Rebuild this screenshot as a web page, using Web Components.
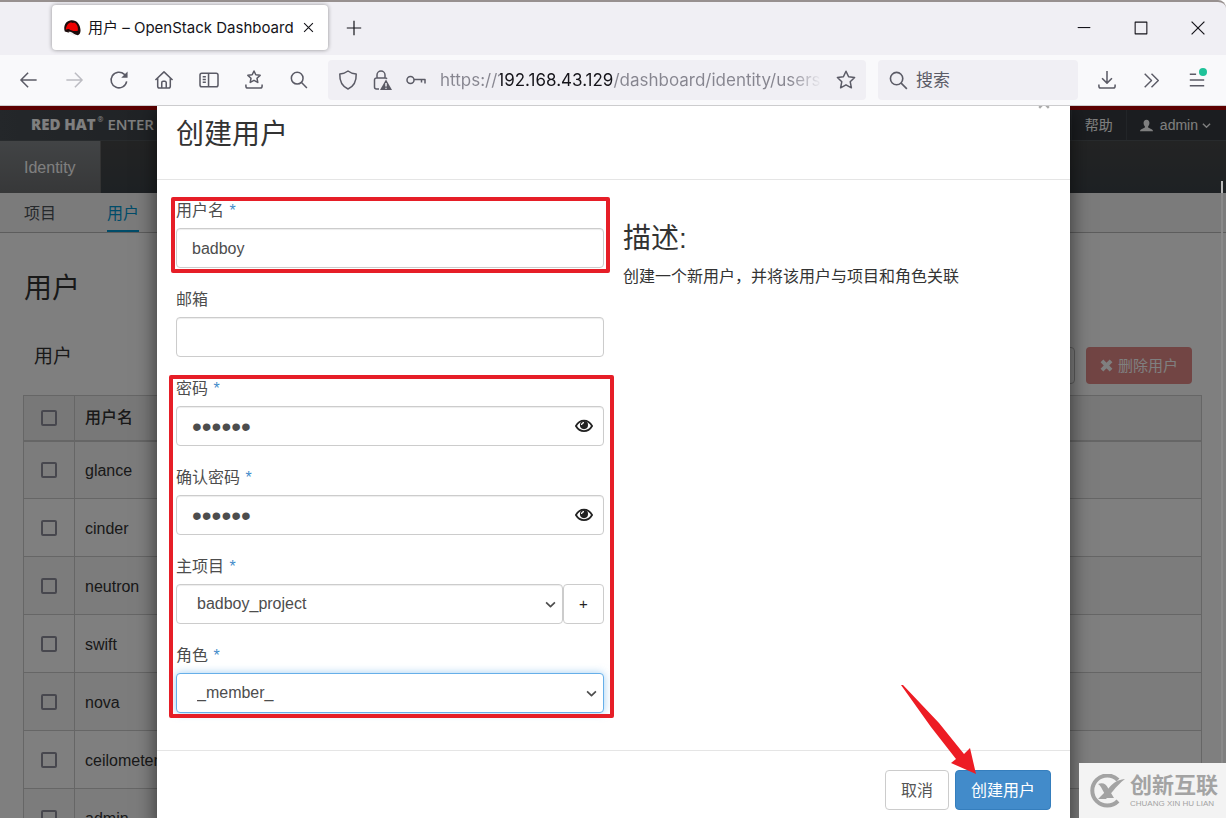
<!DOCTYPE html>
<html lang="zh-CN">
<head>
<meta charset="utf-8">
<title>用户 – OpenStack Dashboard</title>
<style>
  html, body { height: 100%; margin: 0; }
  body {
    display: flex;
    flex-direction: column;
    overflow: hidden;
    font: 16px/24px "Liberation Sans", "Noto Sans CJK SC", sans-serif;
    color: #333;
  }
</style>
</head>
<body>
<browser-tabs heading="用户 – OpenStack Dashboard"></browser-tabs>
<browser-toolbar></browser-toolbar>
<page-view>
  <dashboard-page></dashboard-page>
  <modal-dialog slot="dialog" heading="创建用户">
    <marked-area class="single">
      <form-field label="用户名" value="badboy" required></form-field>
    </marked-area>
    <form-field label="邮箱"></form-field>
    <marked-area class="group">
      <form-field label="密码" type="password" value="badboy" required></form-field>
      <form-field label="确认密码" type="password" value="badboy" required></form-field>
      <form-field label="主项目" type="select" value="badboy_project" addable required></form-field>
      <form-field label="角色" type="select" value="_member_" active required></form-field>
    </marked-area>
    <h3 slot="help-title">描述:</h3>
    <p slot="help">创建一个新用户，并将该用户与项目和角色关联</p>
  </modal-dialog>
  <site-badge slot="badge"></site-badge>
</page-view>

<script>
// Base class: each element only has to give its markup
class BaseElement extends HTMLElement {
  connectedCallback() {
    if (this.shadowRoot) return;
    const template = document.createElement('template');
    template.innerHTML = `<style>
      *, *::before, *::after { box-sizing: border-box; }
      :host { box-sizing: border-box; display: block; }
      button, input, select { font: inherit; color: inherit; margin: 0; }
      button { padding: 0; border: 0; background: none; cursor: pointer; }
      a { color: inherit; text-decoration: none; }
    </style>` + this.render();
    this.attachShadow({ mode: 'open' }).appendChild(template.content.cloneNode(true));
  }
  attr(name) { return this.getAttribute(name) || ''; }
}

// Line icons, drawn on a 20x20 grid
const ICONS = {
  back: '<path d="M18.500 10H1M9 2l-8 8 8 8"/>',
  forward: '<path d="M1.500 10H19M11 2l8 8-8 8"/>',
  reload: '<path d="M18.500 11.500A8.700 8.700 0 1 1 16 3.800L18 6"/><path d="M19.500.500v7h-7z" fill="currentColor" stroke="none"/>',
  home: '<path d="M.500 10 10 1l9.500 9M3 8v9a2 2 0 0 0 2 2h10a2 2 0 0 0 2-2V8M7.500 19v-6A1.500 1.500 0 0 1 9 11.500h2a1.500 1.500 0 0 1 1.500 1.500v6"/>',
  sidebar: '<rect x="0" y="2.500" width="20" height="15" rx="2"/><path d="M9.500 2.500v15M3 6.500h3.500M3 9.500h3.500M3 12.500h3.500"/>',
  saved: '<path d="M10 0l2 4.200 4.800.600-3.500 3.200.900 4.700L10 10.400 5.800 12.700l.900-4.700-3.500-3.200L8 4.200zM1 15v2a2 2 0 0 0 2 2h14a2 2 0 0 0 2-2v-2"/>',
  search: '<circle cx="8" cy="8" r="6.500"/><path d="M12.800 12.800l6 6"/>',
  shield: '<path d="M10 1C7.500 3 5 3.800 1.800 4c-.300 7 1.700 12 8.200 15 6.500-3 8.500-8 8.200-15C15 3.800 12.500 3 10 1z"/>',
  lock: '<path d="M5 8V5a4 4 0 0 1 8 0v3M7 19H4.500a2 2 0 0 1-2-2v-7a2 2 0 0 1 2-2h9a2 2 0 0 1 1.500.700"/><path d="M14 9.500L20 20H8z" fill="currentColor" stroke="none"/><path d="M14 13v3.500M14 17.800v1" stroke="#f0eff4"/>',
  key: '<circle cx="4.500" cy="10" r="3.500"/><path d="M8 9.500h11v4M15.500 9.500v3"/>',
  star: '<path d="M10 1.200l2.600 5.600 6 .700-4.400 4.200 1.200 6.100L10 14.800l-5.400 3 1.200-6.100L1.400 7.500l6-.700z"/>',
  download: '<path d="M10 0v13M4.500 8l5.500 5.500L15.500 8M1 15v2a2 2 0 0 0 2 2h14a2 2 0 0 0 2-2v-2"/>',
  more: '<path d="M2 2l8 8-8 8M10 2l8 8-8 8"/>',
  menu: '<path d="M2 3.500h7M2 10h16M2 16.500h16"/>',
  close: '<path d="M2 2l16 16M18 2L2 18"/>',
  plus: '<path d="M10 1v18M1 10h18"/>',
  minimize: '<path d="M3 9.500h14"/>',
  maximize: '<path d="M3.500 3.500h13v13h-13z"/>',
  chevron: '<path d="M2 6l8 8 8-8"/>',
  hat: '<path d="M2 14C0 8 3 2 9 1.500c6-.500 10 4 10.500 11 0 3-1 5-3 5.500z" fill="#1c0b0b" stroke="none"/><path d="M3 12c1-6 4-8.500 6.500-8 1.500 1 3-.500 4.500 1 2 1.500 3 5 2.500 8-4 1-7 0-10-2-1.500 0-2.500.500-3.500 1z" fill="#e00" stroke="none"/><path d="M6 14.500c2-1 7 2 8 4-3 0-6-1-8-4z" fill="#eee" stroke="none"/>',
  user: '<path d="M10 1c3 0 4.500 2 4.500 5 0 2.500-1 4-2 5v2l6 3c1 .500 1.500 1.500 1.500 3H0c0-1.500.500-2.500 1.500-3l6-3v-2c-1-1-2-2.500-2-5 0-3 1.500-5 4.500-5z" fill="currentColor" stroke="none"/>',
  remove: '<path d="M3 3l14 14M17 3L3 17" stroke-width="6"/>',
  eye: '<path d="M1 10c4.500-8 13.500-8 18 0-4.500 7.500-13.500 7.500-18 0z"/><circle cx="10" cy="9" r="4.500" fill="currentColor" stroke="none"/><path d="M7.300 9A2.700 2.700 0 0 1 10 6.300" stroke="#fff" stroke-width="1.500"/>'
};

class UiIcon extends BaseElement {
  render() {
    const size = this.attr('size') || 20;
    const weight = this.attr('weight') || 1.5;
    return `
      <style>
        :host { display: inline-block; flex: none; line-height: 0; }
        svg { fill: none; stroke: currentColor; stroke-linejoin: round; overflow: visible; }
      </style>
      <svg width="${size}" height="${size}" viewBox="0 0 20 20" stroke-width="${weight}" aria-hidden="true">${ICONS[this.attr('name')]}</svg>`;
  }
}

class BrowserTabs extends BaseElement {
  render() {
    return `
      <style>
        :host {
          flex: none;
          display: flex;
          height: 55px;
          padding: 3px 0 5px 52px;
          border-top: 2px solid #97908f;
          border-top-right-radius: 8px;
          background: #f0eff4;
          color: #15141a;
          font: 15px/20px Inter, "Noto Sans CJK SC", sans-serif;
        }
        .tab {
          display: flex;
          align-items: center;
          width: 276px;
          padding: 0 14px 0 11px;
          gap: 7px;
          border-radius: 4px;
          background: #fff;
          box-shadow: 0 0 4px rgba(0, 0, 0, .4);
        }
        .title { flex: 1; white-space: nowrap; }
        button { display: flex; align-items: center; justify-content: center; }
        .add { margin-left: 18px; }
        .controls { display: flex; margin-left: auto; }
        .controls button { width: 57px; }
      </style>
      <div class="tab">
        <ui-icon name="hat" size="18"></ui-icon>
        <span class="title">${this.attr('heading')}</span>
        <button aria-label="关闭标签页"><ui-icon name="close" size="11" weight="2"></ui-icon></button>
      </div>
      <button class="add" aria-label="新标签页"><ui-icon name="plus" size="16"></ui-icon></button>
      <div class="controls">
        <button aria-label="最小化"><ui-icon name="minimize" size="18" weight="1.200"></ui-icon></button>
        <button aria-label="最大化"><ui-icon name="maximize" size="18" weight="1.200"></ui-icon></button>
        <button aria-label="关闭"><ui-icon name="close" size="16"></ui-icon></button>
      </div>`;
  }
}

class BrowserToolbar extends BaseElement {
  render() {
    const buttons = [['back', '后退'], ['forward', '前进'], ['reload', '刷新'], ['home', '主页'],
      ['sidebar', '侧栏'], ['saved', '书签'], ['search', '查找']];
    return `
      <style>
        :host {
          flex: none;
          display: flex;
          align-items: center;
          height: 51px;
          padding: 0 7px 0 6px;
          border-bottom: 1px solid #ccccce;
          background: #f9f9fb;
          color: #5b5b66;
        }
        .tool {
          display: flex;
          align-items: center;
          justify-content: center;
          position: relative;
          width: 45px;
          height: 40px;
        }
        .tool[disabled] { color: #bcbcc2; }
        .box {
          display: flex;
          align-items: center;
          height: 40px;
          border-radius: 4px;
          background: #f0eff4;
        }
        input {
          min-width: 0;
          flex: 1;
          padding: 0;
          border: 0;
          outline: 0;
          background: none;
          font: 17px/24px Inter, "Noto Sans CJK SC", sans-serif;
        }
        .address { flex: 1; margin-left: 7px; padding: 0 10px; }
        .address ui-icon { margin-right: 14px; }
        .address .last { margin: 0; }
        /* host name dark, rest grey, tail faded out */
        .address input {
          height: 24px;
          margin-right: 9px;
          color: #86858f;
          background: linear-gradient(90deg, #86858f 60px, #15141a 60px, #15141a 174px, #86858f 174px, #86858f 350px, transparent 382px);
          -webkit-background-clip: text;
          background-clip: text;
          -webkit-text-fill-color: transparent;
        }
        .search { width: 200px; margin: 0 6px 0 12px; padding: 0 11px; gap: 8px; }
        .search input::placeholder { color: #5b5b66; opacity: 1; }
        .dot {
          position: absolute;
          top: 8px;
          right: 12px;
          width: 8px;
          height: 8px;
          border-radius: 50%;
          background: #1fc299;
        }
      </style>
      ${buttons.map(([name, label]) => `<button class="tool" aria-label="${label}"${name === 'forward' ? ' disabled' : ''}><ui-icon name="${name}" size="18" weight="1.700"></ui-icon></button>`).join('')}
      <div class="box address">
        <ui-icon name="shield"></ui-icon>
        <ui-icon name="lock"></ui-icon>
        <ui-icon name="key"></ui-icon>
        <input aria-label="地址" value="https://192.168.43.129/dashboard/identity/users">
        <ui-icon class="last" name="star"></ui-icon>
      </div>
      <div class="box search">
        <ui-icon name="search" size="19" weight="1.700"></ui-icon>
        <input aria-label="搜索" placeholder="搜索">
      </div>
      <button class="tool" aria-label="下载"><ui-icon name="download" size="18" weight="1.700"></ui-icon></button>
      <button class="tool" aria-label="更多工具"><ui-icon name="more" size="17" weight="1.700"></ui-icon></button>
      <button class="tool" aria-label="菜单"><ui-icon name="menu" size="18" weight="1.700"></ui-icon><span class="dot"></span></button>`;
  }
}

// Page area below the toolbar: the page, the backdrop and the dialog share one grid cell
class PageView extends BaseElement {
  render() {
    return `
      <style>
        :host { flex: 1; min-height: 0; display: grid; grid-template: minmax(0, 1fr) / minmax(0, 1fr); overflow: hidden; position: relative; }
        .page, .backdrop { grid-area: 1 / 1; min-height: 0; }
        .backdrop { z-index: 1; background: rgba(0, 0, 0, .5); }
        .thumb {
          position: absolute;
          z-index: 1;
          top: 75px;
          right: 3px;
          bottom: 0;
          width: 2px;
          background: linear-gradient(#bbb 12px, #8a8a8a 12px);
        }
        slot[name=badge] { display: block; position: absolute; z-index: 2; right: 0; bottom: 0; }
      </style>
      <div class="page"><slot></slot></div>
      <div class="backdrop"><slot name="dialog"></slot></div>
      <div class="thumb"></div>
      <slot name="badge"></slot>`;
  }
}

class DashboardPage extends BaseElement {
  render() {
    const users = ['glance', 'cinder', 'neutron', 'swift', 'nova', 'ceilometer', 'admin'];
    return `
      <style>
        :host { background: #fff; }
        header {
          display: flex;
          height: 35px;
          border-top: 4px solid #b80000;
          border-bottom: 1px solid #50565a;
          background: linear-gradient(90deg, #484e54, #363b40 30%);
          color: #fff;
          font-size: 14px;
        }
        header a { display: flex; align-items: center; padding-bottom: 2px; }
        .brand {
          flex: 1;
          padding-left: 31px;
          font: 600 15px/28px "Open Sans", sans-serif;
          gap: 2px;
        }
        .brand b { font-weight: 800; }
        .brand sup { padding-bottom: 8px; font-size: 7px; line-height: 8px; }
        .brand span { margin-left: 2px; }
        .help { padding: 0 13px; border-left: 1px solid #444a50; border-right: 1px solid #444a50; }
        .account { padding: 0 15px 0 13px; }
        .account span { margin: 0 4px 0 7px; }
        nav { display: flex; }
        .main { height: 52px; background: linear-gradient(#474849, #3c4349); }
        .main a {
          padding: 15px 24px 0;
          border-right: 1px solid #666;
          background: linear-gradient(#84888b, #6e7072);
          color: #fff;
        }
        .sub { height: 40px; padding: 0 24px; gap: 51px; border-bottom: 1px solid #bbb; background: #f6f6f6; color: #4d5258; }
        .sub a { padding-top: 9px; border-bottom: 2px solid transparent; }
        .sub .on { border-color: #0099d3; color: #0099d3; }
        h1 { margin: 36px 24px 0; font-size: 28px; line-height: 40px; font-weight: 400; }
        .bar {
          display: flex;
          align-items: flex-start;
          height: 37px;
          margin: 38px 34px 11px;
          gap: 11px;
        }
        h2 { flex: 1; margin: 0; font-size: 19px; line-height: 20px; font-weight: 400; }
        .bar button { height: 37px; border-radius: 4px; }
        .create { width: 100px; border: 1px solid #bbb; }
        .delete {
          display: flex;
          align-items: center;
          padding: 0 14px;
          gap: 5px;
          background: #e48a88;
          color: #fff;
          font-size: 15px;
        }
        table { width: calc(100% - 47px); margin-left: 23px; border-collapse: collapse; line-height: 24px; }
        th, td { height: 58px; padding: 2px 10px 0; border: 1px solid #ccc; text-align: left; }
        th { height: 45px; padding-top: 0; border-bottom-width: 2px; background: #f0f0f0; font-weight: 500; }
        tbody tr:nth-child(odd) { background: #f8f8f8; }
        th:first-child, td:first-child { width: 51px; padding: 0; text-align: center; }
        input {
          appearance: none;
          display: block;
          width: 16px;
          height: 16px;
          margin: 0 auto;
          border: 2px solid #8f8f9d;
          border-radius: 2px;
        }
      </style>
      <header>
        <a class="brand" href="#"><b>RED HAT</b><sup>®</sup><span>ENTER</span></a>
        <a class="help" href="#">帮助</a>
        <a class="account" href="#"><ui-icon name="user" size="13"></ui-icon><span>admin</span><ui-icon name="chevron" size="9" weight="3"></ui-icon></a>
      </header>
      <nav class="main"><a href="#">Identity</a></nav>
      <nav class="sub"><a href="#">项目</a><a class="on" href="#">用户</a></nav>
      <h1>用户</h1>
      <div class="bar">
        <h2>用户</h2>
        <button class="create" aria-label="创建"></button>
        <button class="delete"><ui-icon name="remove" size="13"></ui-icon>删除用户</button>
      </div>
      <table>
        <thead><tr><th><input type="checkbox" aria-label="全选"></th><th>用户名</th></tr></thead>
        <tbody>${users.map(name => `<tr><td><input type="checkbox" aria-label="${name}"></td><td>${name}</td></tr>`).join('')}</tbody>
      </table>`;
  }
}

class ModalDialog extends BaseElement {
  render() {
    return `
      <style>
        :host {
          position: relative;
          min-height: 100%;
          margin: 0 156px 0 157px;
          background: #fff;
          box-shadow: 0 5px 20px rgba(0, 0, 0, .6);
        }
        header { padding: 9px 19px 24px; border-bottom: 1px solid #e5e5e5; }
        h2, ::slotted(h3) { margin: 0; font-size: 28px; line-height: 40px; font-weight: 400; }
        .close { position: absolute; top: -9px; right: 20px; color: #aaa; line-height: 0; }
        .body { display: grid; grid-template-columns: 1fr 1fr; gap: 19px; padding: 19px 19px 37px; }
        form { display: grid; gap: 20px; align-content: start; color: #4d4d4d; }
        aside { padding-top: 20px; }
        ::slotted(p) { margin: 6px 0 0; }
        footer { display: flex; justify-content: flex-end; gap: 6px; padding: 19px; border-top: 1px solid #e5e5e5; }
        footer button { height: 40px; padding: 2px 15px 0; border: 1px solid #ccc; border-radius: 4px; color: #555; }
        footer .submit { border-color: #357ebd; background: #428bca; color: #fff; }
        .target { position: relative; }
        .arrow { position: absolute; top: -86px; left: -54px; pointer-events: none; }
      </style>
      <header><h2>${this.attr('heading')}</h2></header>
      <button class="close" aria-label="关闭"><ui-icon name="close" size="12" weight="4"></ui-icon></button>
      <div class="body">
        <form><slot></slot></form>
        <aside><slot name="help-title"></slot><slot name="help"></slot></aside>
      </div>
      <footer>
        <button>取消</button>
        <div class="target">
          <button class="submit">${this.attr('heading')}</button>
          <svg class="arrow" width="80" height="92" aria-hidden="true"><path d="M0 1L2 1L38 39L63 70L69 64L75 90L50 79L55 75L30 43Z" fill="#ed1c24"/></svg>
        </div>
      </footer>`;
  }
}

class FormField extends BaseElement {
  render() {
    const type = this.attr('type') || 'text';
    const control = type === 'select'
      ? `<select id="control"><option>${this.attr('value')}</option></select><ui-icon name="chevron" size="11" weight="3"></ui-icon>`
      : `<input id="control" type="${type}" value="${this.attr('value')}">`;
    return `
      <style>
        :host { display: grid; gap: 5px; }
        label span { margin-left: 1px; color: #428bca; }
        .row { display: flex; }
        .control { flex: 1; display: grid; align-items: center; }
        .control > * { grid-area: 1 / 1; }
        input, select {
          width: 100%;
          height: 40px;
          padding: 2px 15px 0;
          border: 1px solid #ccc;
          border-radius: 4px;
          outline: 0;
          background: #fff;
          box-shadow: inset 0 1px 1px rgba(0, 0, 0, .075);
        }
        input[type=password] { font-size: 28px; }
        select { appearance: none; padding: 0 20px; }
        ui-icon { justify-self: end; margin-right: 7px; pointer-events: none; }
        .reveal { justify-self: end; margin-right: 11px; color: #222; line-height: 0; }
        .reveal ui-icon { margin: 0; }
        .add { width: 41px; border: 1px solid #ccc; border-radius: 4px; color: #222; font-size: 15px; }
        :host([active]) select { border-color: #66afe9; box-shadow: 0 0 8px rgba(102, 175, 233, .6); }
      </style>
      <label for="control">${this.attr('label')}${this.hasAttribute('required') ? ' <span>*</span>' : ''}</label>
      <div class="row">
        <div class="control">
          ${control}
          ${type === 'password' ? '<button class="reveal" type="button" aria-label="显示密码"><ui-icon name="eye" size="18" weight="2"></ui-icon></button>' : ''}
        </div>
        ${this.hasAttribute('addable') ? '<button class="add" type="button">+</button>' : ''}
      </div>`;
  }
}

// Red frame laid over the fields it holds
class MarkedArea extends BaseElement {
  render() {
    return `
      <style>
        :host { position: relative; display: grid; gap: 20px; }
        .frame { position: absolute; inset: -2px -6px -5px -5px; border: 4px solid #e61e27; border-radius: 2px; pointer-events: none; }
        :host(.group) .frame { inset: -2px -10px -5px -7px; }
      </style>
      <slot></slot>
      <div class="frame"></div>`;
  }
}

class SiteBadge extends BaseElement {
  render() {
    return `
      <style>
        :host { display: flex; align-items: center; height: 55px; padding: 0 8px 0 11px; gap: 5px; background: #f3f3f3; color: #a3a3a3; }
        strong { display: block; font: 700 22px/26px "Liberation Sans", "Noto Sans CJK SC", sans-serif; }
        small { display: block; font-size: 8px; line-height: 10px; white-space: nowrap; }
      </style>
      <svg width="35" height="34" viewBox="0 0 35 34" fill="none" stroke="currentColor" aria-hidden="true">
        <path d="M28 6A15 15 0 1 0 28 27" stroke-width="4"/>
        <path d="M8 10c5-2 8 0 10 4l6 10h-7l-5-9c-1-2-2-4-4-5z" fill="currentColor" stroke="none"/>
        <path d="M35 5c-9 1-13 5-17 10L8 25h8l7-8c4-5 7-8 12-12z" fill="currentColor" stroke="none"/>
      </svg>
      <div><strong>创新互联</strong><small>CHUANG XIN HU LIAN</small></div>`;
  }
}

customElements.define('ui-icon', UiIcon);
customElements.define('browser-tabs', BrowserTabs);
customElements.define('browser-toolbar', BrowserToolbar);
customElements.define('page-view', PageView);
customElements.define('dashboard-page', DashboardPage);
customElements.define('modal-dialog', ModalDialog);
customElements.define('form-field', FormField);
customElements.define('marked-area', MarkedArea);
customElements.define('site-badge', SiteBadge);
</script>
</body>
</html>
